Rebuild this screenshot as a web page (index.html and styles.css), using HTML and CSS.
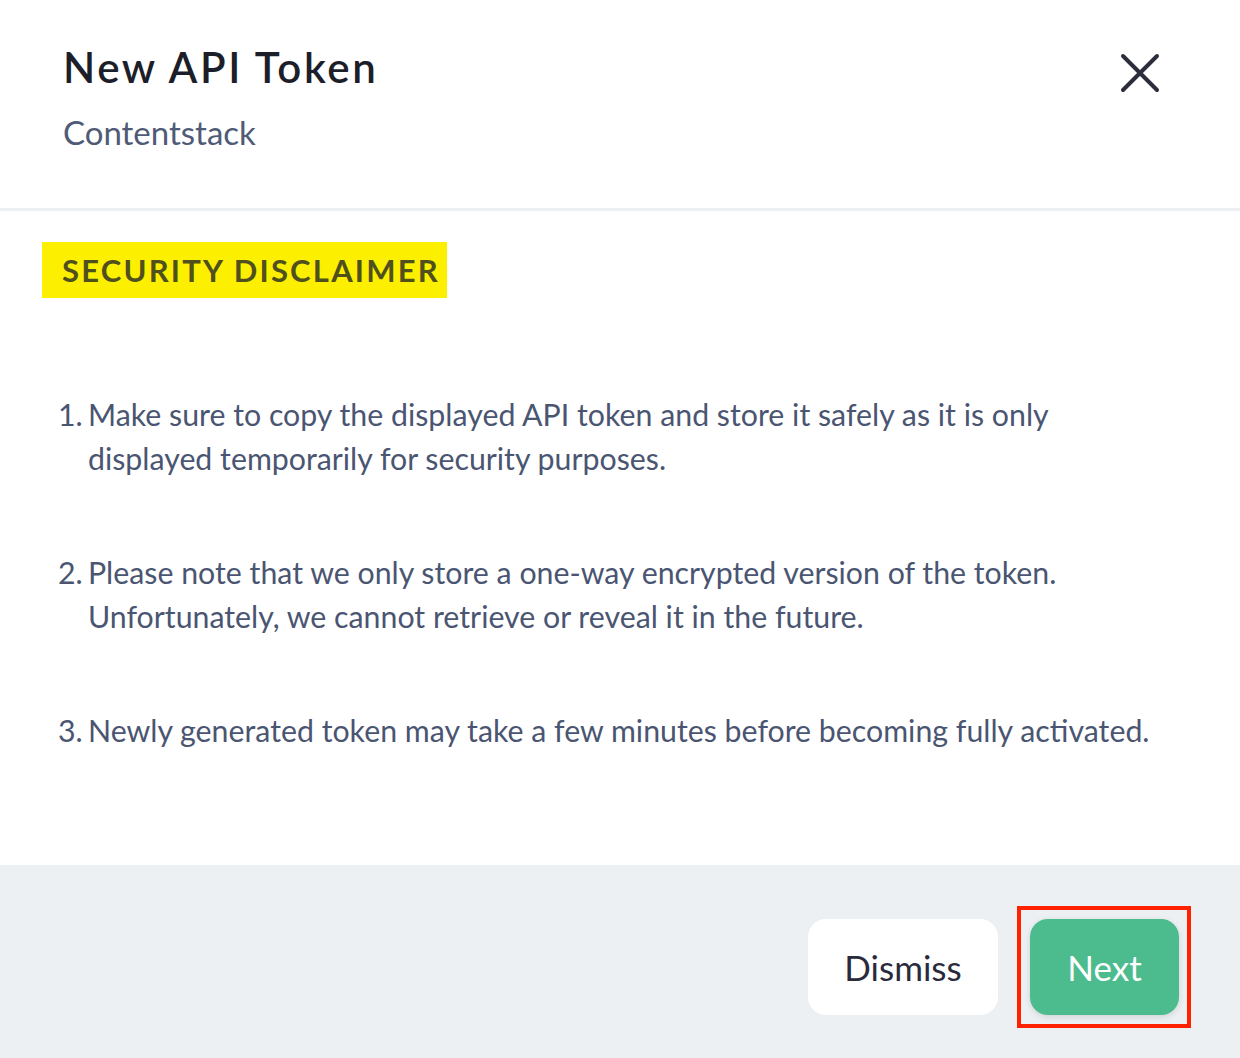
FILE: index.html
```html
<!DOCTYPE html>
<html>
<head>
<meta charset="utf-8">
<link rel="stylesheet" href="styles.css">
</head>
<body>
<div class="modal">
  <header class="modal-header">
    <div class="heading">
      <h1 class="title">New API Token</h1>
      <div class="subtitle">Contentstack</div>
    </div>
    <button class="close" aria-label="Close">
      <svg width="40" height="40" viewBox="0 0 40 40"><path d="M3 3 L37 37 M37 3 L3 37" stroke="#2b2d3c" stroke-width="4" stroke-linecap="round" fill="none"/></svg>
    </button>
  </header>
  <section class="modal-body">
    <div class="badge-row"><span class="badge">SECURITY DISCLAIMER</span></div>
    <ol class="notes">
      <li><span class="num">1.</span><span class="txt">Make sure to copy the displayed API token and store it safely as it is only displayed temporarily for security purposes.</span></li>
      <li><span class="num">2.</span><span class="txt">Please note that we only store a one-way encrypted version of the token. Unfortunately, we cannot retrieve or reveal it in the future.</span></li>
      <li><span class="num">3.</span><span class="txt">Newly generated token may take a few minutes before becoming fully activated.</span></li>
    </ol>
  </section>
  <footer class="modal-footer">
    <button class="btn btn-secondary">Dismiss</button>
    <span class="highlight"><button class="btn btn-primary">Next</button></span>
  </footer>
</div>
</body>
</html>
```
FILE: styles.css
```css
* { box-sizing: border-box; }
html, body { margin: 0; padding: 0; background: #fff; }
body { font-family: Lato, "Open Sans", sans-serif; width: 1240px; height: 1058px; overflow: hidden; }
.modal { display: flex; flex-direction: column; height: 1058px; }
.modal-header {
  display: flex; justify-content: space-between; align-items: flex-start;
  padding: 41px 80px 0 63px; height: 211px;
  border-bottom: 3px solid #edf0f3;
}
.title { margin: 0; font-size: 42px; font-weight: 600; color: #1c1f29; letter-spacing: 2.6px; line-height: 52px; }
.subtitle { margin-top: 19px; font-size: 33px; color: #4f5b76; line-height: 40px; }
.close { background: none; border: 0; padding: 0; margin-top: 12px; width: 40px; height: 40px; cursor: pointer; }
.close svg { display: block; }
.modal-body { flex: 1; padding: 31px 0 0 42px; }
.badge-row { display: flex; }
.badge {
  background: #fcf000; color: #50501c; font-weight: 700; font-size: 31px;
  letter-spacing: 2.2px; padding: 0 7px 0 20px; height: 56px; line-height: 56px;
}
.notes { list-style: none; margin: 94px 0 0 16px; padding: 0; color: #4a5572; font-size: 30.3px; line-height: 44px; }
.notes li { display: flex; margin-bottom: 70px; max-width: 1105px; }
.num { width: 30px; flex: none; }
.modal-footer {
  height: 193px; background: #edf0f3; display: flex; justify-content: flex-end; align-items: flex-start;
  padding: 41px 49px 0 0; gap: 19px;
}
.btn { font-family: Lato, sans-serif; font-size: 35px; border: 0; border-radius: 18px; height: 96px; cursor: pointer; }
.btn-secondary { background: #fff; color: #2a2a3c; width: 190px; margin-top: 13px; }
.highlight { border: 4px solid #ff2200; padding: 9px 8px 9px 9px; display: flex; }
.btn-primary { background: #4cbb8e; color: #fff; width: 149px; box-shadow: 0 2px 6px rgba(0,0,0,0.12); }
```
